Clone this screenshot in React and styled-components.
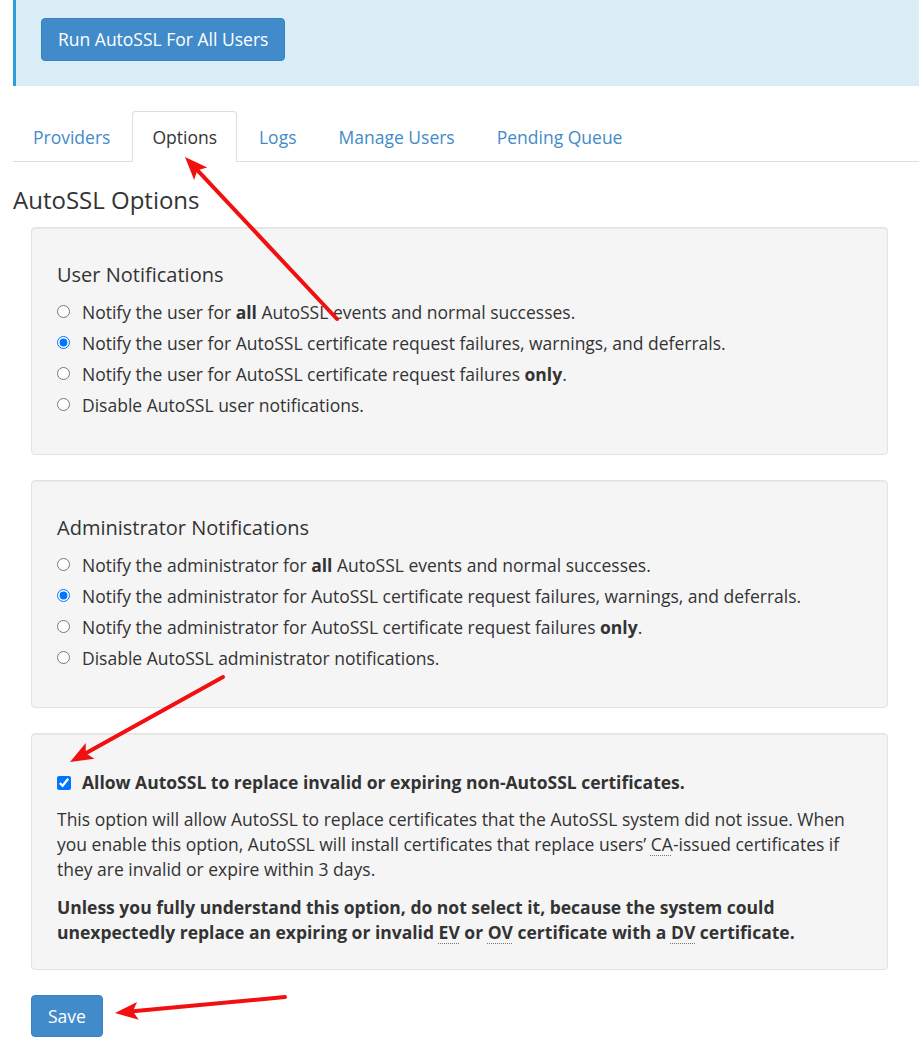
import React from "react";
import styled, { createGlobalStyle } from "styled-components";

const GlobalStyle = createGlobalStyle`
  html, body {
    margin: 0;
    padding: 0;
    background: #fff;
  }
  body {
    font-family: "Open Sans", "DejaVu Sans", sans-serif;
    font-size: 17.5px;
    color: #333;
    overflow: hidden;
  }
`;

const Page = styled.div`
  position: relative;
  width: 919px;
  min-height: 1052px;
  padding-left: 13px;
  box-sizing: border-box;
`;

const InfoAlert = styled.div`
  background: #d9edf7;
  border-left: 3px solid #2c9fd8;
  padding: 18px 0 25px 25px;
`;

const Button = styled.button`
  font-family: inherit;
  font-size: 17.5px;
  line-height: ${p => (p.$compact ? "24px" : "25px")};
  color: #fff;
  background: #428bca;
  border: 1px solid #3a81c0;
  border-radius: 4px;
  padding: 8px 16px;
  cursor: pointer;
`;

const Tabs = styled.ul`
  display: flex;
  list-style: none;
  margin: 25px 0 0;
  padding: 0;
  border-bottom: 1px solid #ddd;
`;

const Tab = styled.li`
  margin: 0 2px -1px 0;
`;

const TabLink = styled.a`
  display: block;
  font-size: 17.5px;
  line-height: 25px;
  padding: 13px 19px 11px;
  border: 1px solid transparent;
  border-radius: 4px 4px 0 0;
  text-decoration: none;
  color: ${p => (p.$active ? "#333" : "#428bca")};
  background: ${p => (p.$active ? "#fff" : "transparent")};
  border-color: ${p => (p.$active ? "#ddd #ddd transparent" : "transparent")};
`;

const Heading = styled.h2`
  font-size: 24px;
  font-weight: 400;
  line-height: 26px;
  margin: 25px 0 14px;
`;

const Well = styled.div`
  width: 857px;
  box-sizing: border-box;
  margin: 0 0 25px 18px;
  padding: 33px 25px 24px;
  background: #f5f5f5;
  border: 1px solid #e3e3e3;
  border-radius: 4px;
  box-shadow: inset 0 1px 1px rgba(0, 0, 0, 0.05);
`;

const Legend = styled.div`
  font-size: 20px;
  line-height: 28px;
  margin-bottom: 7px;
`;

const OptionList = styled.div`
  display: flex;
  flex-direction: column;
  margin-bottom: 10px;
`;

const OptionRow = styled.label`
  display: flex;
  align-items: center;
  gap: 12px;
  height: 31px;
  line-height: 24px;
  cursor: pointer;
`;

const Radio = styled.input.attrs({ type: "radio" })`
  width: 13px;
  height: 13px;
  margin: 0;
  flex: none;
`;

const CheckRow = styled.label`
  display: flex;
  align-items: center;
  gap: 11px;
  margin-top: 3px;
  font-weight: 700;
  line-height: 25px;
`;

const Checkbox = styled.input.attrs({ type: "checkbox" })`
  width: 14px;
  height: 14px;
  margin: 0;
  flex: none;
`;

const Help = styled.p`
  margin: ${p => (p.$strong ? "13px 0 0" : "12px 0 0")};
  line-height: 25px;
  font-weight: ${p => (p.$strong ? 700 : 400)};
`;

const Abbr = styled.abbr`
  text-decoration: underline dotted #777;
  text-decoration-thickness: 1px;
  text-underline-offset: 4px;
  cursor: help;
`;

const Overlay = styled.svg`
  position: absolute;
  left: 0;
  top: 0;
  pointer-events: none;
`;

function Arrow({ from, to }) {
  const dx = to[0] - from[0];
  const dy = to[1] - from[1];
  const len = Math.hypot(dx, dy);
  const ux = dx / len;
  const uy = dy / len;
  const px = -uy;
  const py = ux;
  const headLen = 23;
  const half = 9;
  const bx = to[0] - ux * headLen;
  const by = to[1] - uy * headLen;
  const nx = to[0] - ux * (headLen - 5);
  const ny = to[1] - uy * (headLen - 5);
  const pts = [
    [to[0], to[1]],
    [bx + px * half, by + py * half],
    [nx, ny],
    [bx - px * half, by - py * half],
  ]
    .map(p => p.join(","))
    .join(" ");
  return (
    <g>
      <line x1={from[0]} y1={from[1]} x2={nx} y2={ny} stroke="#f20f0f" strokeWidth="4" strokeLinecap="round" />
      <polygon points={pts} fill="#f20f0f" />
    </g>
  );
}

const tabs = ["Providers", "Options", "Logs", "Manage Users", "Pending Queue"];

function NotificationWell({ title, who, name, noun }) {
  return (
    <Well>
      <Legend>{title}</Legend>
      <OptionList>
        <OptionRow>
          <Radio name={name} />
          <span>Notify the {who} for <b>all</b> AutoSSL events and normal successes.</span>
        </OptionRow>
        <OptionRow>
          <Radio name={name} defaultChecked />
          <span>Notify the {who} for AutoSSL certificate request failures, warnings, and deferrals.</span>
        </OptionRow>
        <OptionRow>
          <Radio name={name} />
          <span>Notify the {who} for AutoSSL certificate request failures <b>only</b>.</span>
        </OptionRow>
        <OptionRow>
          <Radio name={name} />
          <span>Disable AutoSSL {noun} notifications.</span>
        </OptionRow>
      </OptionList>
    </Well>
  );
}

export default function App() {
  return (
    <Page>
      <GlobalStyle />
      <InfoAlert>
        <Button type="button">Run AutoSSL For All Users</Button>
      </InfoAlert>

      <Tabs>
        {tabs.map(t => (
          <Tab key={t}>
            <TabLink href="#" $active={t === "Options"}>{t}</TabLink>
          </Tab>
        ))}
      </Tabs>

      <Heading>AutoSSL Options</Heading>

      <NotificationWell title="User Notifications" who="user" name="user" noun="user" />
      <NotificationWell title="Administrator Notifications" who="administrator" name="admin" noun="administrator" />

      <Well>
        <CheckRow>
          <Checkbox defaultChecked />
          <span>Allow AutoSSL to replace invalid or expiring non-AutoSSL certificates.</span>
        </CheckRow>
        <Help>
          This option will allow AutoSSL to replace certificates that the AutoSSL system did not issue. When
          you enable this option, AutoSSL will install certificates that replace users’{" "}
          <Abbr title="Certificate Authority">CA</Abbr>-issued certificates if they are invalid or expire within 3 days.
        </Help>
        <Help $strong>
          Unless you fully understand this option, do not select it, because the system could
          unexpectedly replace an expiring or invalid <Abbr title="Extended Validation">EV</Abbr> or{" "}
          <Abbr title="Organization Validation">OV</Abbr> certificate with a{" "}
          <Abbr title="Domain Validation">DV</Abbr> certificate.
        </Help>
      </Well>

      <div style={{ marginLeft: 18 }}>
        <Button type="button" $compact>Save</Button>
      </div>

      <Overlay width="919" height="1052" viewBox="0 0 919 1052">
        <Arrow from={[337, 319]} to={[185, 157]} />
        <Arrow from={[223, 677]} to={[70, 762]} />
        <Arrow from={[285, 997]} to={[115, 1013]} />
      </Overlay>
    </Page>
  );
}
